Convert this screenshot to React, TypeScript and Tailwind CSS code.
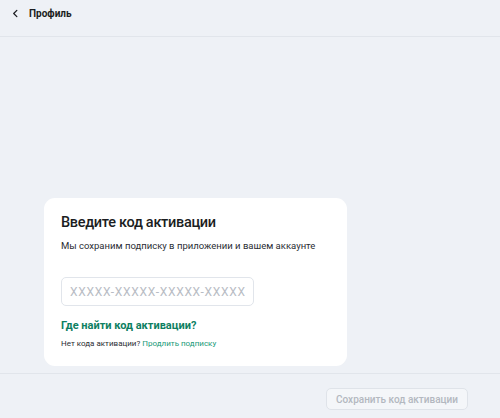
import React from "react";

export default function App() {
    return (
        <div
            className="w-[500px] h-[418px] bg-[#eef1f6] flex flex-col text-[#1b1d21]"
            style={{ fontFamily: "Roboto, 'Noto Sans', sans-serif" }}
        >
            <div className="h-[37px] shrink-0 flex items-center gap-[9px] pl-[11px] border-b border-[#e1e5eb]">
                <svg width="9" height="9" viewBox="0 0 10 10" fill="none" className="-mt-[9px]">
                    <path d="M6.5 1.5 3 5l3.5 3.5" stroke="#1b1d21" strokeWidth="1.4" strokeLinecap="round" strokeLinejoin="round" />
                </svg>
                <span className="text-[10px] font-bold -mt-[9px]">Профиль</span>
            </div>

            <div className="flex-1 flex flex-col justify-end pl-[44px] pb-[7px]">
                <div className="w-[303px] h-[168px] bg-white rounded-[11px] pl-[17px] pt-[15px]">
                    <h1 className="text-[14.5px] font-medium leading-[20px] tracking-[-0.3px]">Введите код активации</h1>
                    <p className="mt-[6px] text-[9.5px] leading-[14px] text-[#2a2d33]">
                        Мы сохраним подписку в приложении и вашем аккаунте
                    </p>
                    <div className="mt-[24px] w-[193px] h-[29px] border border-[#e1e5eb] rounded-[5px] flex items-center pl-[8px]">
                        <input
                            placeholder="XXXXX-XXXXX-XXXXX-XXXXX"
                            className="w-full bg-transparent outline-none text-[12px] tracking-[0.7px] placeholder:text-[#b8bcc4]"
                        />
                    </div>
                    <div className="mt-[13px] text-[11px] leading-[14px] font-bold text-[#0d8062]">Где найти код активации?</div>
                    <div className="mt-[5px] text-[8px] leading-[12px] text-[#2a2d33]">
                        Нет кода активации? <span className="text-[#1a9a78]">Продлить подписку</span>
                    </div>
                </div>
            </div>

            <div className="h-[45px] shrink-0 border-t border-[#e1e5eb] flex items-start justify-end pr-[32px] pt-[14px]">
                <button className="h-[22px] w-[142px] rounded-[5px] border border-[#dfe3e9] bg-[#f4f6f9] text-[10px] font-medium text-[#b3b8c0]">
                    Сохранить код активации
                </button>
            </div>
        </div>
    );
}
